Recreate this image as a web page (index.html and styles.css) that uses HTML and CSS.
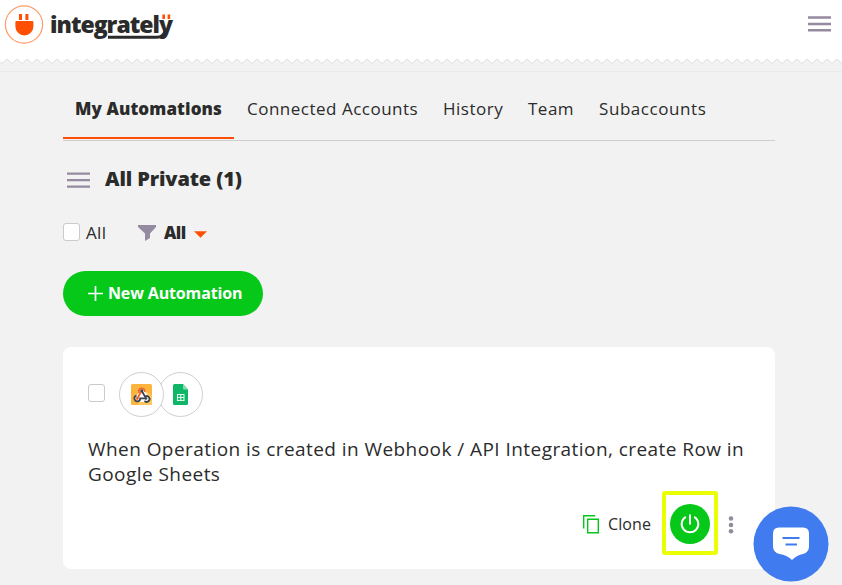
FILE: index.html
```html
<!DOCTYPE html>
<html lang="en">
<head>
<meta charset="utf-8">
<title>Integrately</title>
<link rel="stylesheet" href="styles.css">
</head>
<body>
<header class="header">
  <a class="brand" aria-label="integrately">
    <svg class="brand-mark" width="40" height="40" viewBox="0 0 40 40"><circle cx="20" cy="19.500" r="18.600" fill="#fff" stroke="#ff9a6a" stroke-width="1.2"/><path d="M16.500 9v6M22.900 9v6" stroke="#ff4f05" stroke-width="3"/><path d="M12 16h16.400q1 0 1 1v4.500a9 9 0 0 1-18 0v-4.500q0-1 1-1z" fill="#ff4f05"/></svg>
    <span class="wordmark">
      <span class="word">integrately</span>
      <svg class="cord" width="124" height="32" viewBox="0 0 124 32"><path d="M58 27.300h49q6 0 8-6" fill="none" stroke="#2b2b2b" stroke-width="3"/><path d="M113.700 4.500v4.500M118.900 4.500v4.500" stroke="#ff4f05" stroke-width="2.600"/></svg>
    </span>
  </a>
  <svg class="menu" width="23" height="17" viewBox="0 0 23 17"><path d="M0 1.500h23M0 8h23M0 14.300h23" stroke="#958ba0" stroke-width="2.400"/></svg>
</header>
<svg class="zigzag" width="842" height="14"><defs><pattern id="teeth" width="10" height="14" patternUnits="userSpaceOnUse"><path d="M-3 0l5 4.500 5-4.500 5 4.500V14H-3z" fill="#f2f2f2"/><path d="M-3 0l5 4.500 5-4.500 5 4.500" fill="none" stroke="#dedede"/></pattern></defs><rect width="842" height="14" fill="url(#teeth)"/></svg>
<main class="page">
  <nav class="tabs">
    <a class="tab active"><span class="t1">My Automations</span></a>
    <a class="tab t2">Connected Accounts</a>
    <a class="tab t3">History</a>
    <a class="tab t4">Team</a>
    <a class="tab t5">Subaccounts</a>
  </nav>
  <div class="title-row">
    <svg width="23" height="17" viewBox="0 0 23 17"><path d="M0 1.700h23M0 8.200h23M0 14.600h23" stroke="#958ba0" stroke-width="2.200"/></svg>
    <h1>All Private (1)</h1>
  </div>
  <div class="filters">
    <span class="check"></span><span class="all">All</span>
    <svg class="funnel" width="18" height="16" viewBox="0 0 18 16"><path d="M0 0h18v2l-6 6.500V13l-5 3V8.500L0 2z" fill="#958ba0"/></svg>
    <b class="all-b">All</b>
    <svg class="caret" width="13" height="7" viewBox="0 0 13 7"><path d="M0 .3h13L6.500 6.800z" fill="#ff4f05"/></svg>
  </div>
  <button class="new"><svg width="15" height="15" viewBox="0 0 15 15"><path d="M7.500 0v15M0 7.500h15" stroke="#fff" stroke-width="1.700"/></svg><span>New Automation</span></button>
  <article class="card">
    <div class="apps">
      <span class="check"></span>
      <span class="app first"><svg width="21" height="21" viewBox="0 0 21 21"><rect width="21" height="21" rx="1.500" fill="#fdb43c"/><path d="M11 3l10 9v9H7z" fill="#ffc95c"/><path d="M11 4L3 15l3 3h10l3-4z" fill="#fff"/><g fill="none" stroke-width="1.800"><path d="M8.300 9A3 3 0 1 1 13.700 8" stroke="#f4642b"/><path d="M10.800 7l3.300 5.700a2.800 2.800 0 1 1-.6 4" stroke="#38434c"/><path d="M10.300 7.500L6.400 14.200" stroke="#f4642b"/><path d="M5.500 11.600a2.900 2.900 0 1 0 3.700 2.800h5.600" stroke="#38434c"/></g><circle cx="10.800" cy="6.800" r="1.500" fill="#38434c"/><circle cx="6.300" cy="14.500" r="1.400" fill="#f4642b"/><circle cx="15" cy="14.500" r="1.300" fill="#38434c"/></svg></span>
      <span class="app second"><svg width="15" height="21" viewBox="0 0 15 21"><path d="M1.500 0H10l5 5.500v14q0 1.500-1.500 1.500h-12Q0 21 0 19.500v-18Q0 0 1.500 0z" fill="#0eb768"/><path d="M10 0v4.500q0 1 1 1h4z" fill="#8fd9b2"/><path d="M4.500 10.500h6.500v6H4.500zM7.750 10.500v6M4.500 13.500H11" fill="none" stroke="#dff7ea" stroke-width="1.100"/></svg></span>
    </div>
    <p class="desc"><span class="l1">When Operation is created in Webhook / API Integration, create Row in</span> <span class="l2">Google Sheets</span></p>
    <div class="actions">
      <svg class="copy" width="17" height="19" viewBox="0 0 17 19"><path d="M.7 13.500V.7h11.500M4.700 4.200h10.600v13.600H4.700z" fill="none" stroke="#05c819" stroke-width="1.400"/></svg>
      <span class="clone">Clone</span>
      <span class="highlight"><span class="power"><svg width="20" height="20" viewBox="0 0 20 20"><path d="M5.800 2.800a8.300 8.300 0 1 0 8.400 0M10 .5v10" fill="none" stroke="#fff" stroke-width="2"/></svg></span></span>
      <svg class="dots" width="6" height="18" viewBox="0 0 6 18" fill="#958ba0"><circle cx="3" cy="2.500" r="2.300"/><circle cx="3" cy="9" r="2.300"/><circle cx="3" cy="15.300" r="2.300"/></svg>
    </div>
  </article>
</main>
<svg class="chat" width="76" height="76" viewBox="0 0 76 76"><circle cx="38" cy="38" r="37.500" fill="#407bf0"/><path d="M26 21.500h24q6 0 6 6v13q0 6-6 7.500-6 1-11 6-5-5-12.500-6-6.500-1.500-6.500-7.500v-13q0-6 6-6z" fill="#fff"/><path d="M29.500 32h17M32.500 38.500h11.500" stroke="#407bf0" stroke-width="2.200"/></svg>
</body>
</html>
```
FILE: styles.css
```css
* { box-sizing: border-box; }
body { margin: 0; width: 842px; height: 585px; overflow: hidden; background: #f2f2f2; color: #2b2b2b; font-family: "Open Sans", sans-serif; font-size: 17px; position: relative; }
svg { display: block; flex: none; }
span, a, b, h1 { white-space: nowrap; }
.header { height: 59px; background: #fff; display: flex; justify-content: space-between; padding: 5px 11px 0 4px; }
.brand { display: flex; }
.wordmark { position: relative; margin-left: 6px; height: 40px; }
.word { display: block; font: 800 23px/38px "Open Sans", sans-serif; letter-spacing: -1px; }
.cord { position: absolute; left: 0; top: 5px; }
.menu { margin-top: 11px; }
.zigzag { background: #fff; height: 13px; border-bottom: 1px solid #ebebeb; }
.page { width: 712px; margin-left: 63px; }
.tabs { height: 69px; border-bottom: 1px solid #cfcfcf; display: flex; padding-top: 24px; }
.tab { line-height: 26px; margin-right: 25px; height: 44px; white-space: nowrap; }
.tab.active { width: 171px; height: 43px; margin-right: 13px; padding-left: 12px; border-bottom: 2px solid #ff4f05; font-weight: 800; letter-spacing: .1px; }
.t2 { width: 171px; letter-spacing: .5px; }
.t3 { width: 60px; letter-spacing: .5px; }
.t4 { width: 46px; letter-spacing: .5px; }
.t5 { letter-spacing: .57px; }
.title-row { display: flex; align-items: center; height: 30px; margin-top: 23px; padding-left: 4px; }
h1 { margin: 0 0 0 15px; font-size: 20px; font-weight: 800; line-height: 30px; letter-spacing: -.12px; }
.title-row svg { margin-top: 3px; }
.filters { display: flex; align-items: center; height: 24px; margin-top: 26px; }
.check { width: 17px; height: 18px; background: #fff; border: 1px solid #cbcbcb; border-radius: 3px; }
.all { margin-left: 6px; width: 20px; letter-spacing: .3px; }
.funnel { margin: 2px 0 0 32px; }
.all-b { margin-left: 8px; width: 21px; font-weight: 800; letter-spacing: -.5px; }
.caret { margin: 5px 0 0 9px; }
.new { display: flex; align-items: center; width: 200px; height: 45px; margin: 27px 0 31px; padding: 0 0 0 25px; border: 0; border-radius: 23px; background: #05c819; color: #fff; font: 700 16px "Open Sans", sans-serif; }
.new span { margin: -2px 0 0 5px; letter-spacing: -.14px; }
.card { height: 222px; background: #fff; border-radius: 8px; padding: 25px 25px 0; }
.apps { display: flex; align-items: center; height: 45px; }
.apps .check { margin-top: -3px; }
.app { display: flex; align-items: center; justify-content: center; width: 45px; height: 45px; border: 1px solid #cfcfcf; border-radius: 50%; background: #fff; }
.first { margin-left: 14px; z-index: 1; }
.second { margin-left: -6px; }
.desc { margin: 20px 0 0; font-size: 19px; line-height: 25px; letter-spacing: .44px; }
.desc span { display: block; }
.actions { display: flex; align-items: center; height: 64px; margin-top: 4px; padding-left: 495px; }
.copy { margin-top: 2px; }
.clone { margin: 2px 0 0 8px; width: 43px; font-size: 16px; letter-spacing: .1px; }
.highlight { margin-left: 11px; width: 56px; height: 64px; border: 4px solid #eaff00; border-radius: 3px; padding-top: 1px; display: flex; align-items: center; justify-content: center; flex: none; }
.power { width: 40px; height: 40px; border-radius: 50%; background: #05c819; display: flex; align-items: center; justify-content: center; }
.dots { margin: 3px 0 0 10px; }
.chat { position: absolute; left: 753px; top: 506px; }
```
